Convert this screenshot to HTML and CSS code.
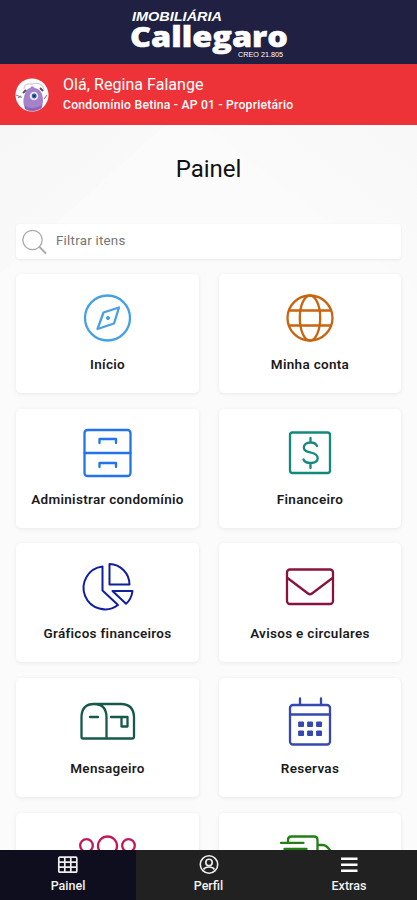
FILE: index.html
```html
<!DOCTYPE html>
<html lang="pt-BR">
<head>
<meta charset="utf-8">
<meta name="viewport" content="width=device-width, initial-scale=1">
<title>Painel</title>
<link rel="stylesheet" href="styles.css">
</head>
<body>
<div class="app">
  <header class="brand">
    <svg class="logo" width="164" height="64" viewBox="0 0 164 64">
      <text class="logo-top" x="5" y="21" textLength="90" lengthAdjust="spacingAndGlyphs">IMOBILIÁRIA</text>
      <text class="logo-name" x="3" y="47" textLength="158" lengthAdjust="spacingAndGlyphs">Callegaro</text>
      <text class="logo-reg" x="111" y="57" textLength="45" lengthAdjust="spacingAndGlyphs">CREO 21.805</text>
    </svg>
  </header>
  <section class="user">
    <svg class="avatar" width="34" height="34" viewBox="0 0 34 34">
      <circle cx="17" cy="17" r="16.5" fill="#fff"/>
      <path d="M9 11Q9 5 17 6Q28 3 29 13" fill="none" stroke="#d3ced8" stroke-width="1.3"/>
      <path d="M10 31Q7 25 9.500 17Q11 11 15 10L17 8L20 10Q26 11 27.500 18Q29 26 26 30.500Q18 35 10 31Z" fill="#a682cb"/>
      <path d="M10 28Q18 33 27 27Q27 29 26 30.500Q18 35 10 31Z" fill="#8a66b5"/>
      <path d="M11 12L8 15M25 10L28 13" stroke="#56496a" stroke-width="1.800"/>
      <path d="M1 17L7 19.500M3 20L6 18M29 21L32 17" stroke="#8b8098" stroke-width="1.200"/>
      <circle cx="19" cy="18" r="4.300" fill="#e8e2f5"/>
      <circle cx="19.200" cy="18" r="2.400" fill="#2c62a8"/>
      <circle cx="19.200" cy="18" r="1" fill="#142648"/>
    </svg>
    <div class="user-text">
      <div class="hello">Olá, Regina Falange</div>
      <div class="unit">Condomínio Betina - AP 01 - Proprietário</div>
    </div>
  </section>
  <main class="content">
    <h1 class="title">Painel</h1>
    <label class="search">
      <svg width="28" height="28" viewBox="0 0 28 28" fill="none" stroke="#aaa" stroke-linecap="round">
        <circle cx="11.500" cy="12" r="9.700" stroke-width="1.300"/><path d="M18.500 19L24.500 25" stroke-width="1.800"/>
      </svg>
      <span>Filtrar itens</span>
    </label>
    <div class="grid">
      <a class="card"><svg class="icon c-sky" viewBox="0 0 60 60"><circle cx="29.500" cy="30" r="22.500"/><path d="M25.500 24.500L41 19.500L36 35.500L19.500 41Z"/><circle cx="30" cy="30" r="1.600" class="fill"/></svg><span>Início</span></a>
      <a class="card"><svg class="icon c-orange" viewBox="0 0 60 60"><circle cx="30" cy="30" r="22.500"/><ellipse cx="30" cy="30" rx="10.200" ry="22.500"/><path d="M9.500 22.500H50.500M9.500 37.500H50.500"/></svg><span>Minha conta</span></a>
      <a class="card"><svg class="icon c-blue" viewBox="0 0 60 60"><rect x="6.500" y="7" width="46" height="46" rx="3"/><path d="M6.500 30H52.500M21.500 20V16H38V20M21.500 44V40H38V44"/></svg><span>Administrar condomínio</span></a>
      <a class="card"><svg class="icon c-teal" viewBox="0 0 60 60"><rect x="10" y="9.500" width="40" height="40.500" rx="2.500"/><path d="M37 23C36 20.500 34 19.500 30.500 19.500C26.500 19.500 23.800 21.500 23.800 24.500C23.800 28 27 28.700 30.500 29.500C34.500 30.400 37.700 31.500 37.700 35C37.700 38.500 34.500 40 30.500 40C27 40 24.500 39 23.500 36.500M30.500 15V19.500M30.500 40V45"/></svg><span>Financeiro</span></a>
      <a class="card"><svg class="icon c-navy thin" viewBox="0 0 60 60"><path d="M24.500 9.500A21.500 21.500 0 1 0 40 48L24.500 33.500Z"/><path d="M31.500 7V27.500H51.500A20.500 20.500 0 0 0 31.500 7Z"/><path d="M34.500 34H54.500Q53.500 42 48 46.800Z"/></svg><span>Gráficos financeiros</span></a>
      <a class="card"><svg class="icon c-wine" viewBox="0 0 60 60"><rect x="7" y="12.500" width="46" height="34.500" rx="3"/><path d="M7.500 21L28 36.500Q30 38 32 36.500L52.500 21"/></svg><span>Avisos e circulares</span></a>
      <a class="card"><svg class="icon c-green" viewBox="0 0 60 60"><path d="M3.500 45V24.500Q4 12 16 12Q28 12 28.500 24.500V46.500H5Q3.500 46.500 3.500 45M16 12H43Q55.500 12 56 25V44.500Q56 46.500 54 46.500H28.500M12 25H20M33 25H49.500V34.500H43.500V25"/></svg><span>Mensageiro</span></a>
      <a class="card"><svg class="icon c-indigo" viewBox="0 0 60 60"><rect x="10" y="13" width="40" height="39.500" rx="3"/><path d="M10 22.500H50M20 6.500V13M41 6.500V13"/><path class="fill" d="M19 30h4.500v4.500h-4.500zM28 30h4.500v4.500h-4.500zM37 30h4.500v4.500h-4.500zM19 39h4.500v4.500h-4.500zM28 39h4.500v4.500h-4.500zM37 39h4.500v4.500h-4.500z"/></svg><span>Reservas</span></a>
      <a class="card"><svg class="icon c-rose" viewBox="0 0 60 60"><circle cx="29.500" cy="19" r="9.500"/><circle cx="8.500" cy="18.500" r="6.300"/><circle cx="50.500" cy="18.500" r="6.300"/></svg></a>
      <a class="card"><svg class="icon c-leaf" viewBox="0 0 60 60"><path d="M8 15.500V13Q8 9.500 11.500 9.500H34Q37.500 9.500 37.500 13V28M1 15.800H23.500M4.500 22H26.500M37.500 18H43Q46.500 18 50.500 24"/></svg></a>
    </div>
  </main>
  <nav class="tabs">
    <a class="tab active"><svg width="22" height="20" viewBox="0 0 22 20" fill="none" stroke="#eee" stroke-width="1.700"><rect x="1.800" y="2.200" width="18" height="15" rx="1"/><path d="M1.800 7.200H19.800M1.800 12.200H19.800M7.800 2.200V17.200M13.800 2.200V17.200"/></svg><span>Painel</span></a>
    <a class="tab"><svg width="22" height="20" viewBox="0 0 22 20" fill="none" stroke="#eee" stroke-width="1.600"><circle cx="11" cy="9.500" r="8.700"/><circle cx="11" cy="7.500" r="3.200"/><path d="M5.500 14.500Q7 12 11 12T16.500 14.500"/></svg><span>Perfil</span></a>
    <a class="tab"><svg width="22" height="20" viewBox="0 0 22 20" stroke="#fff" stroke-width="2.500"><path d="M3 3.800H19.500M3 9.800H19.500M3 15.800H19.500"/></svg><span>Extras</span></a>
  </nav>
</div>
</body>
</html>
```
FILE: styles.css
```css
* { box-sizing: border-box; }
body { margin: 0; font-family: Roboto, sans-serif; }
.app { width: 417px; height: 900px; overflow: hidden; display: flex; flex-direction: column; background: #fafafa; }
.brand { flex: none; height: 64px; background: #1f2042; display: flex; justify-content: center; }
.logo { fill: #fff; }
.logo-top { font: italic 700 13px "Liberation Sans", sans-serif; }
.logo-name { font: 800 28.5px "Open Sans", sans-serif; stroke: #fff; stroke-width: .5px; }
.logo-reg { font: 400 6.8px "Liberation Sans", sans-serif; }
.user { flex: none; height: 61px; background: #ee3338; color: #fff; display: flex; align-items: center; gap: 14px; padding-left: 15px; }
.hello { font-size: 16px; line-height: 21px; letter-spacing: .05px; white-space: nowrap; }
.unit { font-size: 12.2px; line-height: 21px; letter-spacing: .22px; font-weight: 500; white-space: nowrap; }
.content {
  flex: 1; min-height: 0; overflow: hidden; padding: 0 16px;
  background:
    linear-gradient(138deg, #f7f7f7 0, #f9f9f9 110px, transparent 111px),
    linear-gradient(218deg, #f8f8f8 0, #fafafa 130px, transparent 131px),
    #fbfbfb;
}
.title { margin: 28px 0 39px; text-align: center; font-size: 24px; line-height: 32px; font-weight: 400; color: #111; }
.search { display: flex; align-items: center; height: 35px; padding-left: 5px; gap: 7px; background: #fff; border-radius: 4px; box-shadow: 0 1px 3px rgba(0,0,0,.07); color: #757575; font-size: 13.3px; letter-spacing: .25px; }
.search span { margin-top: -2px; }
.grid { margin-top: 15px; display: grid; grid-template-columns: 183px 182px; justify-content: space-between; grid-auto-rows: 119px; row-gap: 15.7px; }
.card { background: #fff; border-radius: 5px; box-shadow: 0 1px 4px rgba(0,0,0,.08); padding-top: 14px; display: flex; flex-direction: column; align-items: center; color: #1b1b1b; font-size: 13.5px; line-height: 18px; font-weight: 600; letter-spacing: .3px; white-space: nowrap; }
.card span { margin-top: 7px; }
.icon { flex: none; width: 60px; height: 60px; fill: none; stroke: currentColor; stroke-width: 2.3; stroke-linejoin: round; stroke-linecap: round; }
.icon .fill { fill: currentColor; stroke-width: 1; }
.thin { stroke-width: 2; }
.c-sky { color: #45a0e6; }
.c-orange { color: #c9640f; }
.c-blue { color: #2374e8; }
.c-teal { color: #12897a; }
.c-navy { color: #111f9e; }
.c-wine { color: #86143d; }
.c-green { color: #16594b; }
.c-indigo { color: #3448b0; }
.c-rose { color: #c2185b; }
.c-leaf { color: #238016; }
.tabs { flex: none; height: 50px; display: grid; grid-template-columns: 136px 145px 136px; background: #212121; }
.tab { display: flex; flex-direction: column; align-items: center; padding-top: 5px; gap: 3px; color: #f2f2f2; font-size: 12.5px; line-height: 16px; font-weight: 500; }
.active { background: #0e0e1f; }
```
